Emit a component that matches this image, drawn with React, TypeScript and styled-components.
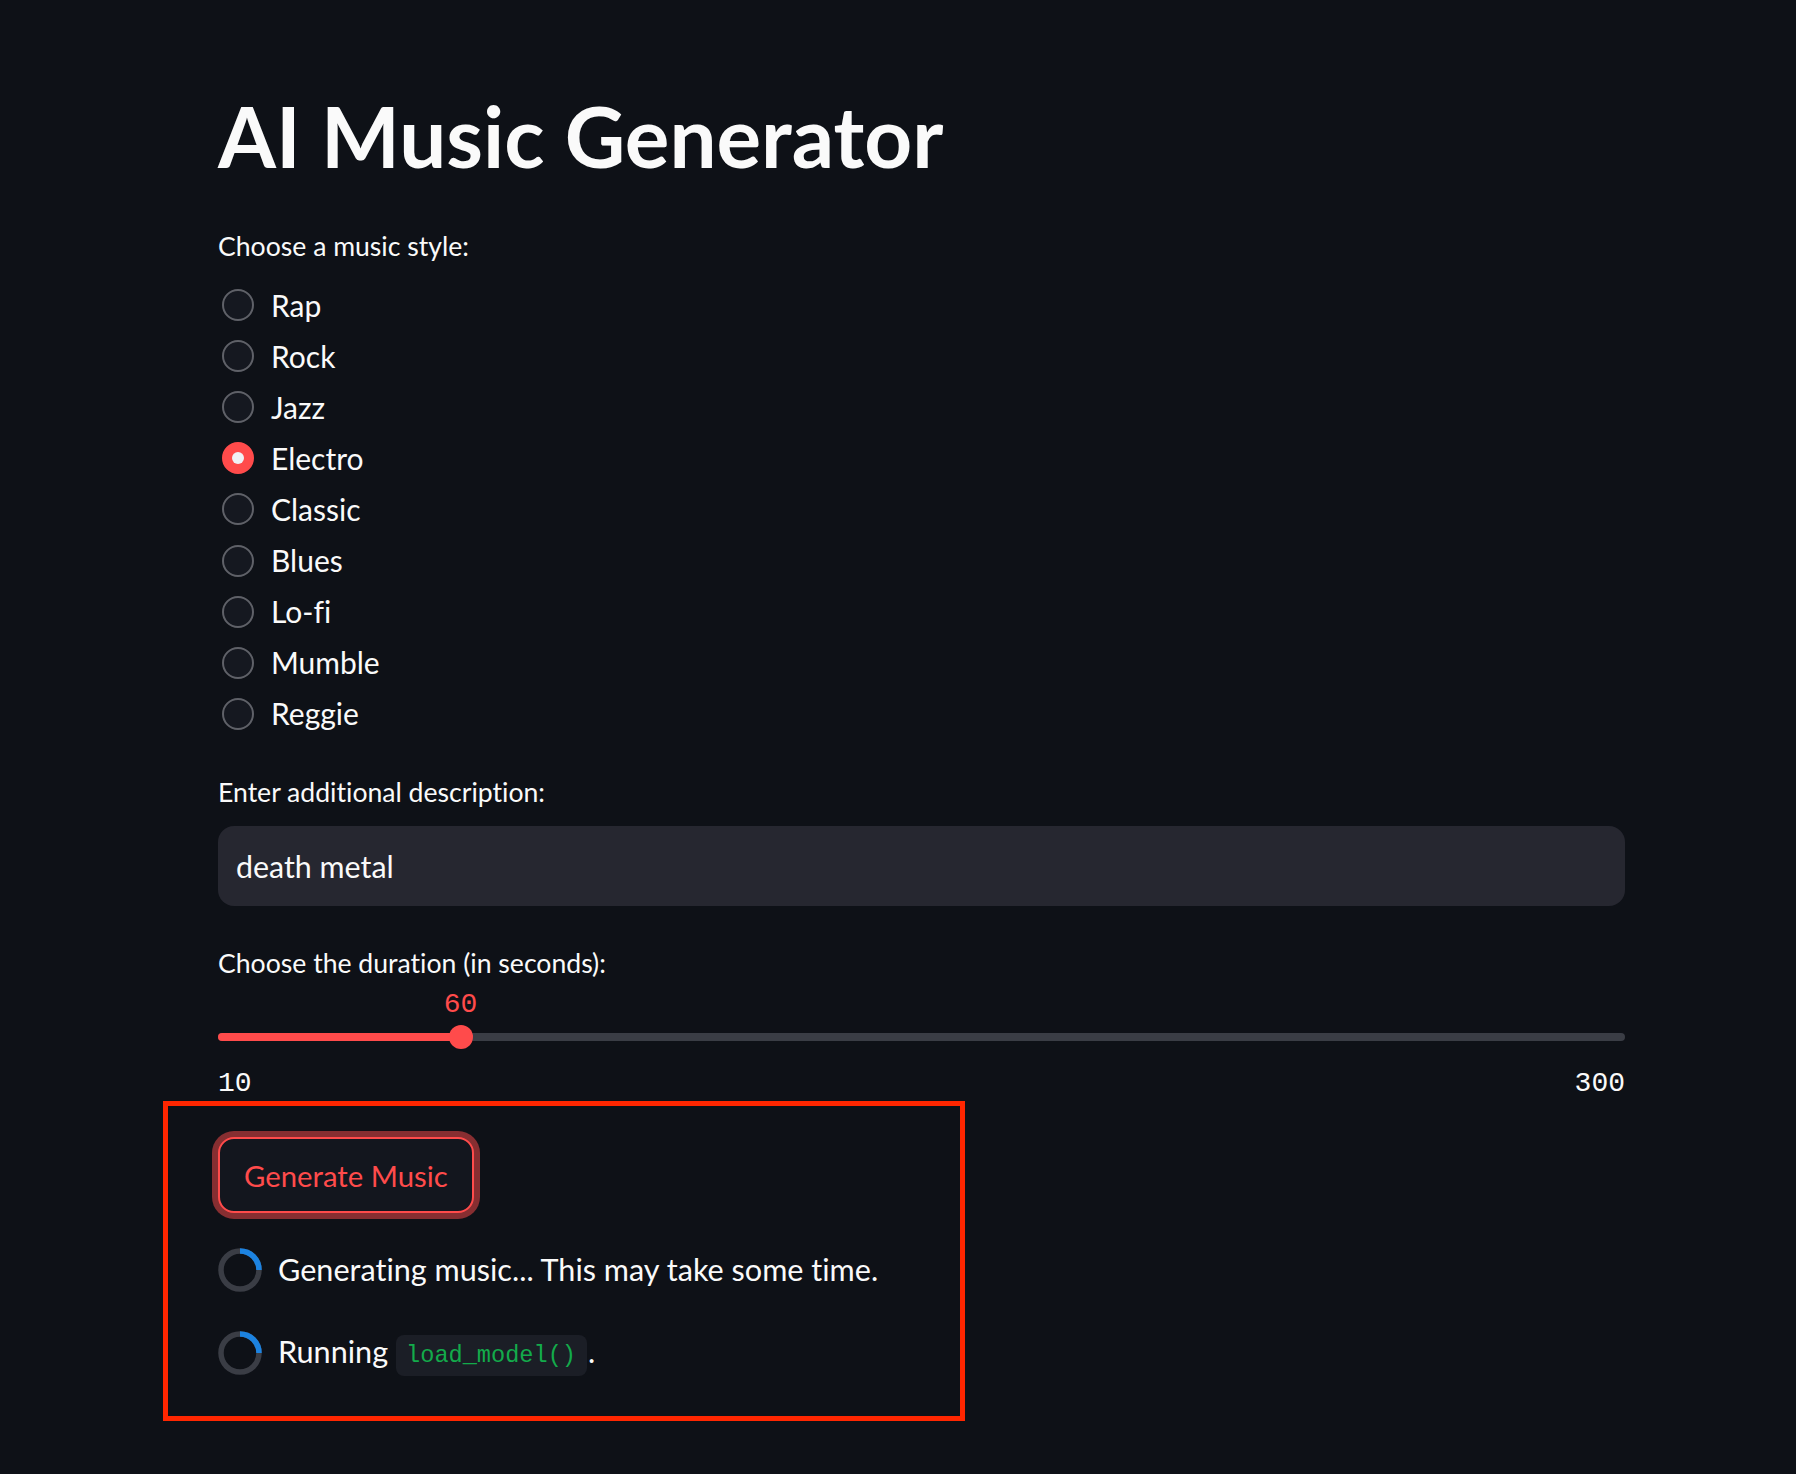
import React from "react";
import styled, { createGlobalStyle } from "styled-components";

const GlobalStyle = createGlobalStyle`
  html, body {
    margin: 0;
    padding: 0;
    background: #0e1117;
  }
  body {
    min-height: 1474px;
    font-family: Lato, "Noto Sans", sans-serif;
    font-variant-ligatures: none;
    font-feature-settings: "liga" 0, "clig" 0;
    color: #fafafa;
  }
`;

const Main = styled.main`
  display: flex;
  flex-direction: column;
  align-items: stretch;
  width: 1407px;
  padding: 86px 0 0 218px;
`;

const Title = styled.h1`
  margin: 0;
  font-family: Lato, "Noto Sans", sans-serif;
  font-weight: 700;
  font-size: 83.5px;
  line-height: 100px;
  color: #fafafa;
`;

const Label = styled.div<{ $mt: number }>`
  margin-top: ${(p) => p.$mt}px;
  font-size: 26.6px;
  line-height: 36px;
  color: #fafafa;
`;

const RadioGroup = styled.div`
  display: flex;
  flex-direction: column;
  margin-top: 15.5px;
`;

const RadioRow = styled.label`
  display: flex;
  align-items: center;
  height: 51.1px;
  gap: 17px;
  padding-left: 4px;
  font-size: 30px;
  line-height: 51.1px;
  cursor: pointer;
`;

const RadioCircle = styled.span<{ $checked: boolean }>`
  box-sizing: border-box;
  width: 32px;
  height: 32px;
  border-radius: 50%;
  flex: none;
  display: flex;
  align-items: center;
  justify-content: center;
  background: ${(p) => (p.$checked ? "#ff4b4b" : "#151820")};
  border: 2px solid ${(p) => (p.$checked ? "#ff4b4b" : "#5f6168")};
`;

const RadioDot = styled.span`
  width: 12px;
  height: 12px;
  border-radius: 50%;
  background: #f0f2f6;
`;

const TextInput = styled.div`
  box-sizing: border-box;
  margin-top: 15.6px;
  height: 80px;
  border-radius: 16px;
  background: #262730;
  display: flex;
  align-items: center;
  padding: 0 18px;
  font-size: 30.4px;
  color: #fafafa;
`;

const Slider = styled.div`
  display: flex;
  flex-direction: column;
  margin-top: 8px;
`;

const ValueRow = styled.div`
  position: relative;
  height: 32px;
`;

const ThumbValue = styled.span`
  position: absolute;
  top: 0;
  transform: translateX(-50%);
  font-family: "Liberation Mono", "DejaVu Sans Mono", monospace;
  font-size: 28px;
  line-height: 32px;
  color: #ff4b4b;
`;

const TrackArea = styled.div`
  position: relative;
  height: 32px;
  display: flex;
  align-items: center;
`;

const Track = styled.div`
  position: relative;
  width: 100%;
  height: 8px;
  border-radius: 4px;
  background: #3a3d45;
`;

const TrackFill = styled.div`
  position: absolute;
  left: 0;
  top: 0;
  height: 8px;
  border-radius: 4px;
  background: #ff4b4b;
`;

const Thumb = styled.div`
  position: absolute;
  top: 50%;
  width: 24px;
  height: 24px;
  border-radius: 50%;
  background: #ff4b4b;
  transform: translate(-50%, -50%);
`;

const TickRow = styled.div`
  display: flex;
  justify-content: space-between;
  margin-top: 15px;
  font-family: "Liberation Mono", "DejaVu Sans Mono", monospace;
  font-size: 28px;
  line-height: 32px;
  color: #fafafa;
`;

const Section = styled.section`
  position: relative;
  display: flex;
  flex-direction: column;
  align-items: flex-start;
  margin-top: 37.5px;

  &::after {
    content: "";
    position: absolute;
    top: -36px;
    left: -55px;
    width: 802px;
    height: 320px;
    box-sizing: border-box;
    border: 5px solid #ff2600;
    pointer-events: none;
  }
`;

const Button = styled.button`
  box-sizing: border-box;
  height: 76px;
  padding: 0 24px;
  border-radius: 16px;
  border: 2px solid #ff4b4b;
  background: #13161e;
  color: #ff4b4b;
  font-family: Lato, "Noto Sans", sans-serif;
  font-size: 29.3px;
  box-shadow: 0 0 0 6px rgba(255, 75, 75, 0.5);
  cursor: pointer;
`;

const SpinnerRow = styled.div<{ $mt: number }>`
  display: flex;
  align-items: center;
  gap: 16px;
  height: 44px;
  margin-top: ${(p) => p.$mt}px;
  font-size: 30.6px;
  line-height: 44px;
  color: #fafafa;
`;

const Code = styled.code`
  display: inline-block;
  margin: 0 1px 0 8px;
  padding: 0 11px 0 10px;
  height: 41px;
  line-height: 41px;
  border-radius: 8px;
  background: #1b1e26;
  color: #13ab4b;
  font-family: "Liberation Mono", "DejaVu Sans Mono", monospace;
  font-size: 23.6px;
  vertical-align: middle;
`;

const Spinner: React.FC = () => (
  <svg width="44" height="44" viewBox="0 0 44 44" style={{ flex: "none" }}>
    <circle cx="22" cy="22" r="19" fill="none" stroke="#3a3d45" strokeWidth="5.5" />
    <path d="M22 3 A19 19 0 0 1 41 22" fill="none" stroke="#1c83e1" strokeWidth="5.5" />
  </svg>
);

const styles = ["Rap", "Rock", "Jazz", "Electro", "Classic", "Blues", "Lo-fi", "Mumble", "Reggie"];

export default function App() {
  const min = 10;
  const max = 300;
  const value = 60;
  const pct = ((value - min) / (max - min)) * 100;
  return (
    <>
      <GlobalStyle />
      <Main>
        <Title>AI Music Generator</Title>
        <Label $mt={42}>Choose a music style:</Label>
        <RadioGroup>
          {styles.map((s) => (
            <RadioRow key={s}>
              <RadioCircle $checked={s === "Electro"}>{s === "Electro" && <RadioDot />}</RadioCircle>
              {s}
            </RadioRow>
          ))}
        </RadioGroup>
        <Label $mt={35}>Enter additional description:</Label>
        <TextInput>death metal</TextInput>
        <Label $mt={38.6}>Choose the duration (in seconds):</Label>
        <Slider>
          <ValueRow>
            <ThumbValue style={{ left: `${pct}%` }}>{value}</ThumbValue>
          </ValueRow>
          <TrackArea>
            <Track>
              <TrackFill style={{ width: `${pct}%` }} />
              <Thumb style={{ left: `${pct}%` }} />
            </Track>
          </TrackArea>
          <TickRow>
            <span>{min}</span>
            <span>{max}</span>
          </TickRow>
        </Slider>
        <Section>
          <Button>Generate Music</Button>
          <SpinnerRow $mt={35}>
            <Spinner />
            <span>Generating music... This may take some time.</span>
          </SpinnerRow>
          <SpinnerRow $mt={39}>
            <Spinner />
            <span>
              Running<Code>load_model()</Code>.
            </span>
          </SpinnerRow>
        </Section>
      </Main>
    </>
  );
}
